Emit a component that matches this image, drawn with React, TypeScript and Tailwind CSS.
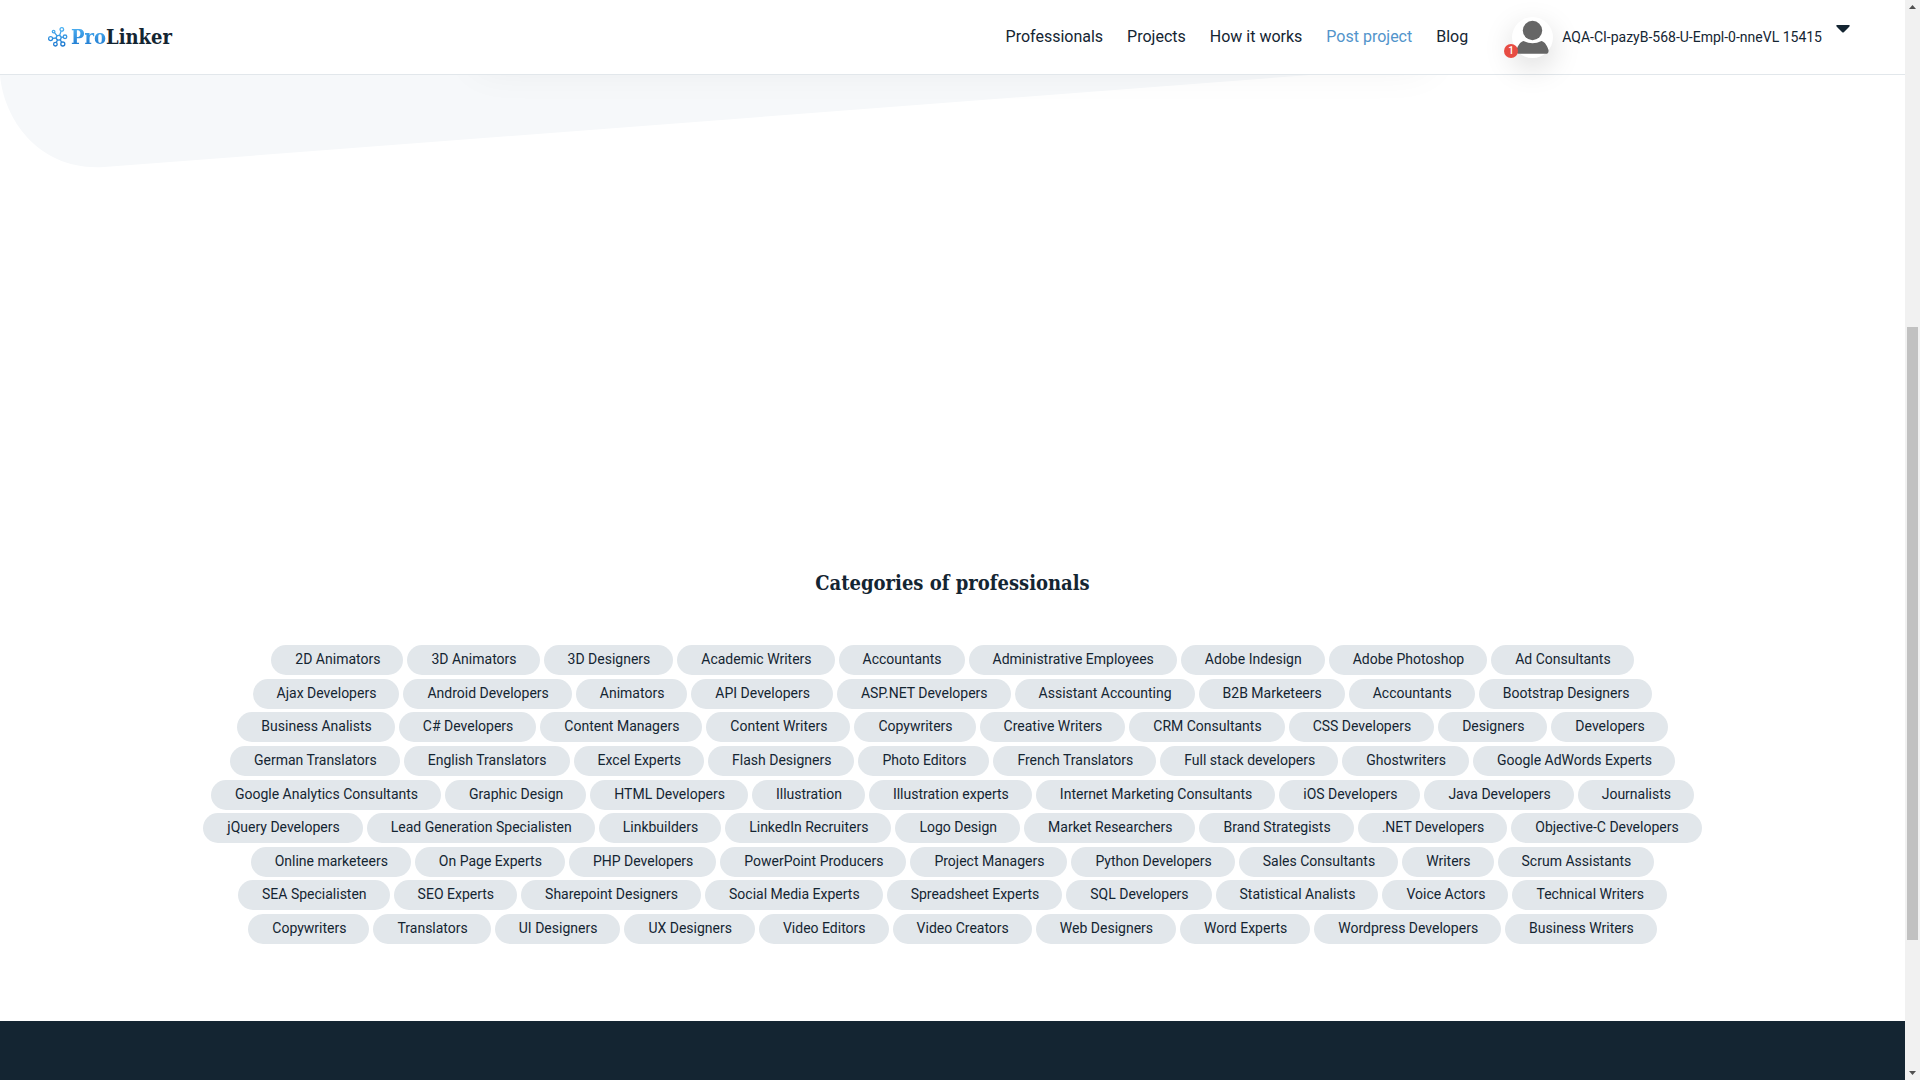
import React from "react";

const categories = [
  "2D Animators", "3D Animators", "3D Designers", "Academic Writers", "Accountants", "Administrative Employees", "Adobe Indesign", "Adobe Photoshop", "Ad Consultants",
  "Ajax Developers", "Android Developers", "Animators", "API Developers", "ASP.NET Developers", "Assistant Accounting", "B2B Marketeers", "Accountants", "Bootstrap Designers",
  "Business Analists", "C# Developers", "Content Managers", "Content Writers", "Copywriters", "Creative Writers", "CRM Consultants", "CSS Developers", "Designers", "Developers",
  "German Translators", "English Translators", "Excel Experts", "Flash Designers", "Photo Editors", "French Translators", "Full stack developers", "Ghostwriters", "Google AdWords Experts",
  "Google Analytics Consultants", "Graphic Design", "HTML Developers", "Illustration", "Illustration experts", "Internet Marketing Consultants", "iOS Developers", "Java Developers", "Journalists",
  "jQuery Developers", "Lead Generation Specialisten", "Linkbuilders", "LinkedIn Recruiters", "Logo Design", "Market Researchers", "Brand Strategists", ".NET Developers", "Objective-C Developers",
  "Online marketeers", "On Page Experts", "PHP Developers", "PowerPoint Producers", "Project Managers", "Python Developers", "Sales Consultants", "Writers", "Scrum Assistants",
  "SEA Specialisten", "SEO Experts", "Sharepoint Designers", "Social Media Experts", "Spreadsheet Experts", "SQL Developers", "Statistical Analists", "Voice Actors", "Technical Writers",
  "Copywriters", "Translators", "UI Designers", "UX Designers", "Video Editors", "Video Creators", "Web Designers", "Word Experts", "Wordpress Developers", "Business Writers",
];

const navItems = [
  { label: "Professionals" },
  { label: "Projects" },
  { label: "How it works" },
  { label: "Post project", highlight: true },
  { label: "Blog" },
];

function LogoMark() {
  return (
    <svg className="h-5 w-5 shrink-0" viewBox="0 0 20 20" fill="none" strokeWidth="1.3" aria-hidden="true">
      <defs>
        <linearGradient id="mark" x1="0" y1="20" x2="0" y2="0" gradientUnits="userSpaceOnUse">
          <stop stopColor="#1773cc" />
          <stop offset="1" stopColor="#52b6f5" />
        </linearGradient>
      </defs>
      <g stroke="url(#mark)">
        <circle cx="10.7" cy="10.7" r="2.4" />
        <circle cx="13.8" cy="2.4" r="1.8" />
        <circle cx="5.6" cy="4.6" r="1.3" />
        <circle cx="17" cy="9.8" r="1.8" />
        <circle cx="2.6" cy="11.6" r="2" />
        <circle cx="7.4" cy="17.2" r="1.8" />
        <circle cx="14.8" cy="17" r="2" />
        <path d="M13.1 4.1 11.6 8.4M6.5 5.6 9.1 8.9M13.1 10.4l2.1-.3M4.6 11.4l3.7-.4M9.6 12.8l-1.4 2.8M12.1 12.7l1.6 2.6" />
      </g>
    </svg>
  );
}

function Avatar() {
  return (
    <span className="relative block h-[41px] w-[41px] shrink-0 rounded-full bg-white shadow-[0_10px_30px_rgba(0,0,0,0.15)]">
      <svg className="h-full w-full" viewBox="0 0 41 41" fill="#666" aria-hidden="true">
        <circle cx="20.5" cy="13.5" r="9.7" />
        <path d="M11.5 24Q20.5 28.5 29.5 24C33 25 35 28.500 36.500 33Q37 36.800 33.500 36.800H7.500Q4 36.800 4.500 33C6 28.500 8 25 11.500 24Z" />
      </svg>
      <span className="absolute -left-2 bottom-0 flex h-[14px] w-[14px] items-center justify-center rounded-full bg-[#e74c43] text-[10px] leading-none font-medium text-white">
        1
      </span>
    </span>
  );
}

function Header() {
  return (
    <header className="relative z-10 flex h-[75px] shrink-0 items-center justify-between border-b border-[#e2e7eb] bg-white pr-[55px] pl-12">
      <a href="#home" className="flex items-center gap-[3px] font-['Roboto_Slab','DejaVu_Serif_Condensed','DejaVu_Serif',serif] text-xl leading-none font-bold">
        <LogoMark />
        <span>
          <span className="bg-linear-to-t from-[#1773cc] to-[#52b6f5] bg-clip-text text-transparent">Pro</span>Linker
        </span>
      </a>
      <div className="flex items-center">
        <nav className="flex gap-6 text-base">
          {navItems.map((item) => (
            <a key={item.label} href="#nav" className={item.highlight ? "text-[#5294cb]" : ""}>
              {item.label}
            </a>
          ))}
        </nav>
        <button type="button" className="ml-11 flex items-center text-sm">
          <Avatar />
          <span className="ml-[9px]">AQA-CI-pazyB-568-U-Empl-0-nneVL 15415</span>
          <svg className="mb-4 ml-[14px] h-2 w-[14px]" viewBox="0 0 14 8" fill="#142532" aria-hidden="true">
            <path d="M1 0H13Q14.500 .6 13 2L8 7Q7 8 6 7L1 2Q-.5 .6 1 0Z" />
          </svg>
        </button>
      </div>
    </header>
  );
}

function Scrollbar() {
  return (
    <div className="flex w-[15px] shrink-0 flex-col items-center justify-between bg-[#f1f1f1] py-[5px]" aria-hidden="true">
      <svg className="h-1 w-[7px]" viewBox="0 0 7 4" fill="#505050"><path d="M0 4 3.500 0 7 4Z" /></svg>
      <div className="flex w-[11px] flex-1 flex-col">
        <div className="grow-318" />
        <div className="grow-613 bg-[#c1c1c1]" />
        <div className="grow-131" />
      </div>
      <svg className="h-1 w-[7px]" viewBox="0 0 7 4" fill="#505050"><path d="M0 0H7L3.500 4Z" /></svg>
    </div>
  );
}

export default function App() {
  return (
    <div className="flex h-screen overflow-hidden bg-white font-['Roboto',sans-serif] text-[#142532]">
      <div className="flex min-w-0 flex-1 flex-col">
        <Header />
        <main>
          <div className="relative overflow-hidden pb-[360px]">
            <svg className="block h-[93px] w-full" viewBox="0 0 1905 93" preserveAspectRatio="none" aria-hidden="true">
              <path d="M0 0C4 46 40 96 104 92L1310 0Z" fill="#f6f8fa" />
            </svg>
            <div className="absolute -top-14 right-1/4 left-1/4 h-10 shadow-[0_10px_40px_rgba(0,0,0,0.06)]" />
          </div>
          <section className="px-12 pt-[39px] pb-[77px]">
            <h2 className="text-center font-['Roboto_Slab','DejaVu_Serif_Condensed','DejaVu_Serif',serif] text-xl leading-8 font-bold">
              Categories of professionals
            </h2>
            <ul className="mx-auto mt-[46px] flex min-h-[299px] max-w-[1508px] flex-wrap content-between justify-center gap-x-1 text-sm">
              {categories.map((name, i) => (
                <li key={i} className="flex">
                  <a href="#category" className="rounded-full bg-[#e2e7eb] pt-1 pr-[23px] pb-[6px] pl-6">
                    {name}
                  </a>
                </li>
              ))}
            </ul>
          </section>
        </main>
        <footer className="flex-1 bg-[#142532]" />
      </div>
      <Scrollbar />
    </div>
  );
}
